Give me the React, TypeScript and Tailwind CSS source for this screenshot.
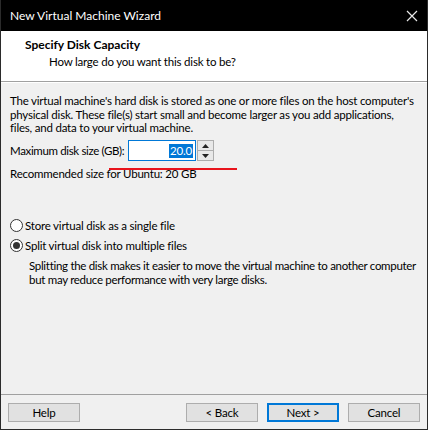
import React from 'react';

const font = { fontFamily: 'Lato, "Noto Sans", sans-serif' };

function Radio({ checked, label }: { checked?: boolean; label: string }) {
  return (
    <div className="flex items-center h-[20px]">
      <span className="w-[13px] h-[13px] rounded-full border border-[#333] bg-white flex items-center justify-center mr-[2px]">
        {checked && <span className="w-[7px] h-[7px] rounded-full bg-[#333]" />}
      </span>
      <span>{label}</span>
    </div>
  );
}

function Btn({ label, primary }: { label: string; primary?: boolean }) {
  return (
    <div
      className={
        'w-[72px] h-[19px] flex items-center justify-center bg-[#e1e1e1] ' +
        (primary ? 'border-2 border-[#0078d7]' : 'border border-[#adadad]')
      }
    >
      {label}
    </div>
  );
}

export default function App() {
  return (
    <div className="w-[428px] h-[430px] flex flex-col bg-[#f0f0f0] border-x border-b border-[#2b2b2b] text-[11.5px] tracking-[-0.2px] text-black leading-[14px]" style={font}>
      <div className="h-[31px] bg-black text-white flex items-center justify-between pl-[9px] pr-[8px] shrink-0">
        <span className="text-[12px] tracking-normal">New Virtual Machine Wizard</span>
        <svg width="12" height="12" viewBox="0 0 12 12" className="mr-[1px]">
          <path d="M1 1 L11 11 M11 1 L1 11" stroke="#e8e8e8" strokeWidth="1.2" />
        </svg>
      </div>
      <div className="h-[51px] bg-white shrink-0 pl-[24px] pt-[7px] border-b border-[#a0a0a0]">
        <div className="font-bold h-[17px] text-[12px] tracking-normal">Specify Disk Capacity</div>
        <div className="pl-[24px]">How large do you want this disk to be?</div>
      </div>
      <div className="flex-1 relative pl-[9px] pt-[11px] border-t border-white">
        <p className="whitespace-nowrap leading-[13.5px]">
          The virtual machine's hard disk is stored as one or more files on the host computer's
          <br />
          physical disk. These file(s) start small and become larger as you add applications,
          <br />
          files, and data to your virtual machine.
        </p>
        <div className="flex items-center mt-[5.5px] h-[21px]">
          <span className="w-[118px] whitespace-nowrap tracking-[-0.35px]">Maximum disk size (GB):</span>
          <div className="w-[68px] h-[21px] border border-[#0078d7] bg-white flex items-center justify-end pr-[2px]">
            <span className="bg-[#0078d7] text-white px-[1px]">20.0</span>
          </div>
          <div className="ml-[1px] w-[17px] h-[21px] flex flex-col">
            <div className="flex-1 border border-[#adadad] bg-[#e8e8e8] flex items-center justify-center">
              <svg width="7" height="4" viewBox="0 0 7 4"><path d="M0 4 L3.5 0 L7 4 Z" fill="#222" /></svg>
            </div>
            <div className="flex-1 border border-t-0 border-[#adadad] bg-[#e8e8e8] flex items-center justify-center">
              <svg width="7" height="4" viewBox="0 0 7 4"><path d="M0 0 L3.5 4 L7 0 Z" fill="#222" /></svg>
            </div>
          </div>
        </div>
        <div className="mt-[6px] leading-[13.5px]">Recommended size for Ubuntu: 20 GB</div>
        <div className="absolute left-[108px] top-[85px] w-[128px] h-[2px] bg-[#e8141c]" />
        <div className="mt-[35px]">
          <Radio label="Store virtual disk as a single file" />
          <Radio checked label="Split virtual disk into multiple files" />
          <p className="pl-[19px] mt-[3px] whitespace-nowrap tracking-[-0.3px]">
            Splitting the disk makes it easier to move the virtual machine to another computer
            <br />
            but may reduce performance with very large disks.
          </p>
        </div>
      </div>
      <div className="h-[35px] shrink-0 border-t border-[#a0a0a0] flex items-start pt-[8px] px-[7px]">
        <Btn label="Help" />
        <div className="flex-1" />
        <Btn label="< Back" />
        <div className="w-[9px]" />
        <Btn label="Next >" primary />
        <div className="w-[9px]" />
        <Btn label="Cancel" />
      </div>
    </div>
  );
}
